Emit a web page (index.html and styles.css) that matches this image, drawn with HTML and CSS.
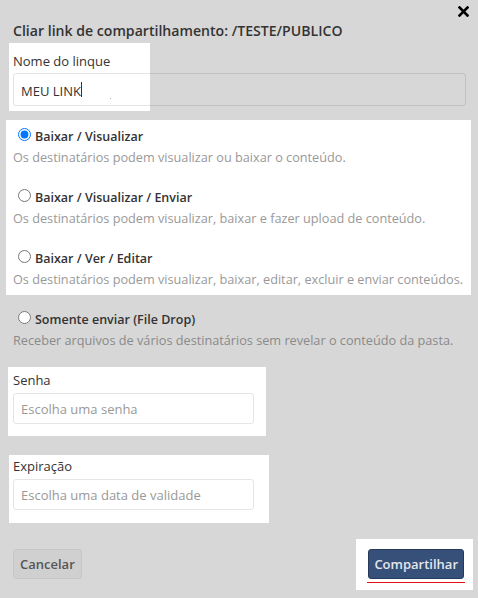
FILE: index.html
```html
<!DOCTYPE html>
<html lang="pt">
<head>
<meta charset="utf-8">
<title>Criar link de compartilhamento</title>
<link rel="stylesheet" href="styles.css">
</head>
<body>
<div class="dialog">
  <div class="highlights" aria-hidden="true">
    <div class="hl hl-name"></div>
    <div class="hl hl-options"></div>
    <div class="hl hl-pass"></div>
    <div class="hl hl-exp"></div>
    <div class="hl hl-share"></div>
  </div>

  <div class="topbar">
    <button class="close" aria-label="Fechar">
      <svg width="11" height="11" viewBox="0 0 11 11"><path d="M1.5 1.5 L9.5 9.5 M9.5 1.5 L1.5 9.5" stroke="#000" stroke-width="2.6" stroke-linecap="square"/></svg>
    </button>
  </div>

  <h1 class="title">Cliar link de compartilhamento: /TESTE/PUBLICO</h1>

  <div class="field field-name">
    <label class="label">Nome do linque</label>
    <div class="input input-wide"><span class="value">MEU LINK</span><span class="caret"></span><span class="dot"></span></div>
  </div>

  <div class="options">
    <div class="option">
      <label class="option-label"><input type="radio" name="perm" checked> Baixar / Visualizar</label>
      <p class="option-desc">Os destinatários podem visualizar ou baixar o conteúdo.</p>
    </div>
    <div class="option">
      <label class="option-label"><input type="radio" name="perm"> Baixar / Visualizar / Enviar</label>
      <p class="option-desc">Os destinatários podem visualizar, baixar e fazer upload de conteúdo.</p>
    </div>
    <div class="option">
      <label class="option-label"><input type="radio" name="perm"> Baixar / Ver / Editar</label>
      <p class="option-desc">Os destinatários podem visualizar, baixar, editar, excluir e enviar conteúdos.</p>
    </div>
    <div class="option">
      <label class="option-label"><input type="radio" name="perm"> Somente enviar (File Drop)</label>
      <p class="option-desc option-desc-dim">Receber arquivos de vários destinatários sem revelar o conteúdo da pasta.</p>
    </div>
  </div>

  <div class="field field-pass">
    <label class="label">Senha</label>
    <div class="input input-short"><span class="placeholder">Escolha uma senha</span></div>
  </div>

  <div class="field field-exp">
    <label class="label">Expiração</label>
    <div class="input input-short"><span class="placeholder">Escolha uma data de validade</span></div>
  </div>

  <div class="footer">
    <button class="btn btn-cancel">Cancelar</button>
    <button class="btn btn-share">Compartilhar</button>
  </div>
</div>
</body>
</html>
```

FILE: styles.css
```css
html, body {
  margin: 0;
  padding: 0;
  background: #d7d7d7;
}

body {
  font-family: "Open Sans", "Liberation Sans", sans-serif;
  color: #333;
  width: 478px;
  height: 598px;
  overflow: hidden;
}

.dialog {
  position: relative;
  padding: 0 12px 0 13px;
}

.highlights {
  position: absolute;
  inset: 0;
  z-index: 0;
}

.hl {
  position: absolute;
  background: #fff;
}

.hl-name { left: 9px; top: 43px; width: 141px; height: 68px; }
.hl-options { left: 6px; top: 120px; width: 465px; height: 175px; }
.hl-pass { left: 8px; top: 367px; width: 258px; height: 69px; }
.hl-exp { left: 9px; top: 455px; width: 260px; height: 68px; }
.hl-share { left: 356px; top: 539px; width: 117px; height: 51px; }

.topbar, .title, .field, .options, .footer {
  position: relative;
  z-index: 1;
}

.topbar {
  height: 21px;
  display: flex;
  justify-content: flex-end;
  align-items: flex-start;
}

.close {
  background: none;
  border: 0;
  padding: 0;
  margin: 6px -3px 0 0;
  width: 11px;
  height: 11px;
  display: flex;
}

.title {
  margin: 0;
  font-size: 14.1px;
  line-height: 20px;
  font-weight: 600;
  color: #333;
  white-space: nowrap;
}

.label {
  display: block;
  font-size: 13px;
  line-height: 18px;
  color: #333;
}

.field-name { margin-top: 11px; }
.field-pass { margin-top: 22px; }
.field-exp { margin-top: 33px; }

.input {
  box-sizing: border-box;
  border: 1px solid rgba(0, 0, 0, 0.1);
  border-radius: 3px;
  display: flex;
  align-items: center;
  padding: 0 7px;
  font-size: 13px;
  position: relative;
}

.input-wide {
  width: 453px;
  height: 33px;
  margin-top: 3px;
}

.input-short {
  width: 241px;
  height: 31px;
  margin-top: 4px;
}

.value {
  color: #333;
  padding-top: 2px;
}

.caret {
  width: 1px;
  height: 15px;
  background: #333;
  margin-left: 0;
}

.dot {
  position: absolute;
  left: 96px;
  top: 24px;
  width: 1px;
  height: 1px;
  background: #aaa;
}

.placeholder {
  color: #999;
}

.options {
  margin-top: 22px;
  display: flex;
  flex-direction: column;
  gap: 23px;
}

.option-label {
  display: flex;
  align-items: center;
  font-size: 12.5px;
  line-height: 18px;
  font-weight: 600;
  color: #333;
}

.option-label input {
  margin: 0 4px 0 5px;
  width: 13px;
  height: 13px;
  position: relative;
  top: -3px;
}

.option-desc {
  margin: 3px 0 0;
  font-size: 12.7px;
  line-height: 17px;
  color: #999;
  white-space: nowrap;
}

.option-desc-dim {
  color: #8a8a8a;
}

.footer {
  margin-top: 39px;
  display: flex;
  justify-content: space-between;
  padding-right: 2px;
}

.btn {
  font-family: inherit;
  font-size: 13px;
  font-weight: 600;
  height: 30px;
  border-radius: 3px;
  padding: 0 6px;
  position: relative;
}

.btn-cancel {
  background: #d0d0d0;
  border: 1px solid #c6c6c6;
  color: #555;
}

.btn-share {
  background: #36507a;
  border: 1px solid #263a5a;
  color: #e4e6ea;
  padding: 0 5px;
}

.btn-share::after {
  content: "";
  position: absolute;
  left: -2px;
  right: -2px;
  bottom: -5px;
  height: 1px;
  background: #e01010;
}
```
